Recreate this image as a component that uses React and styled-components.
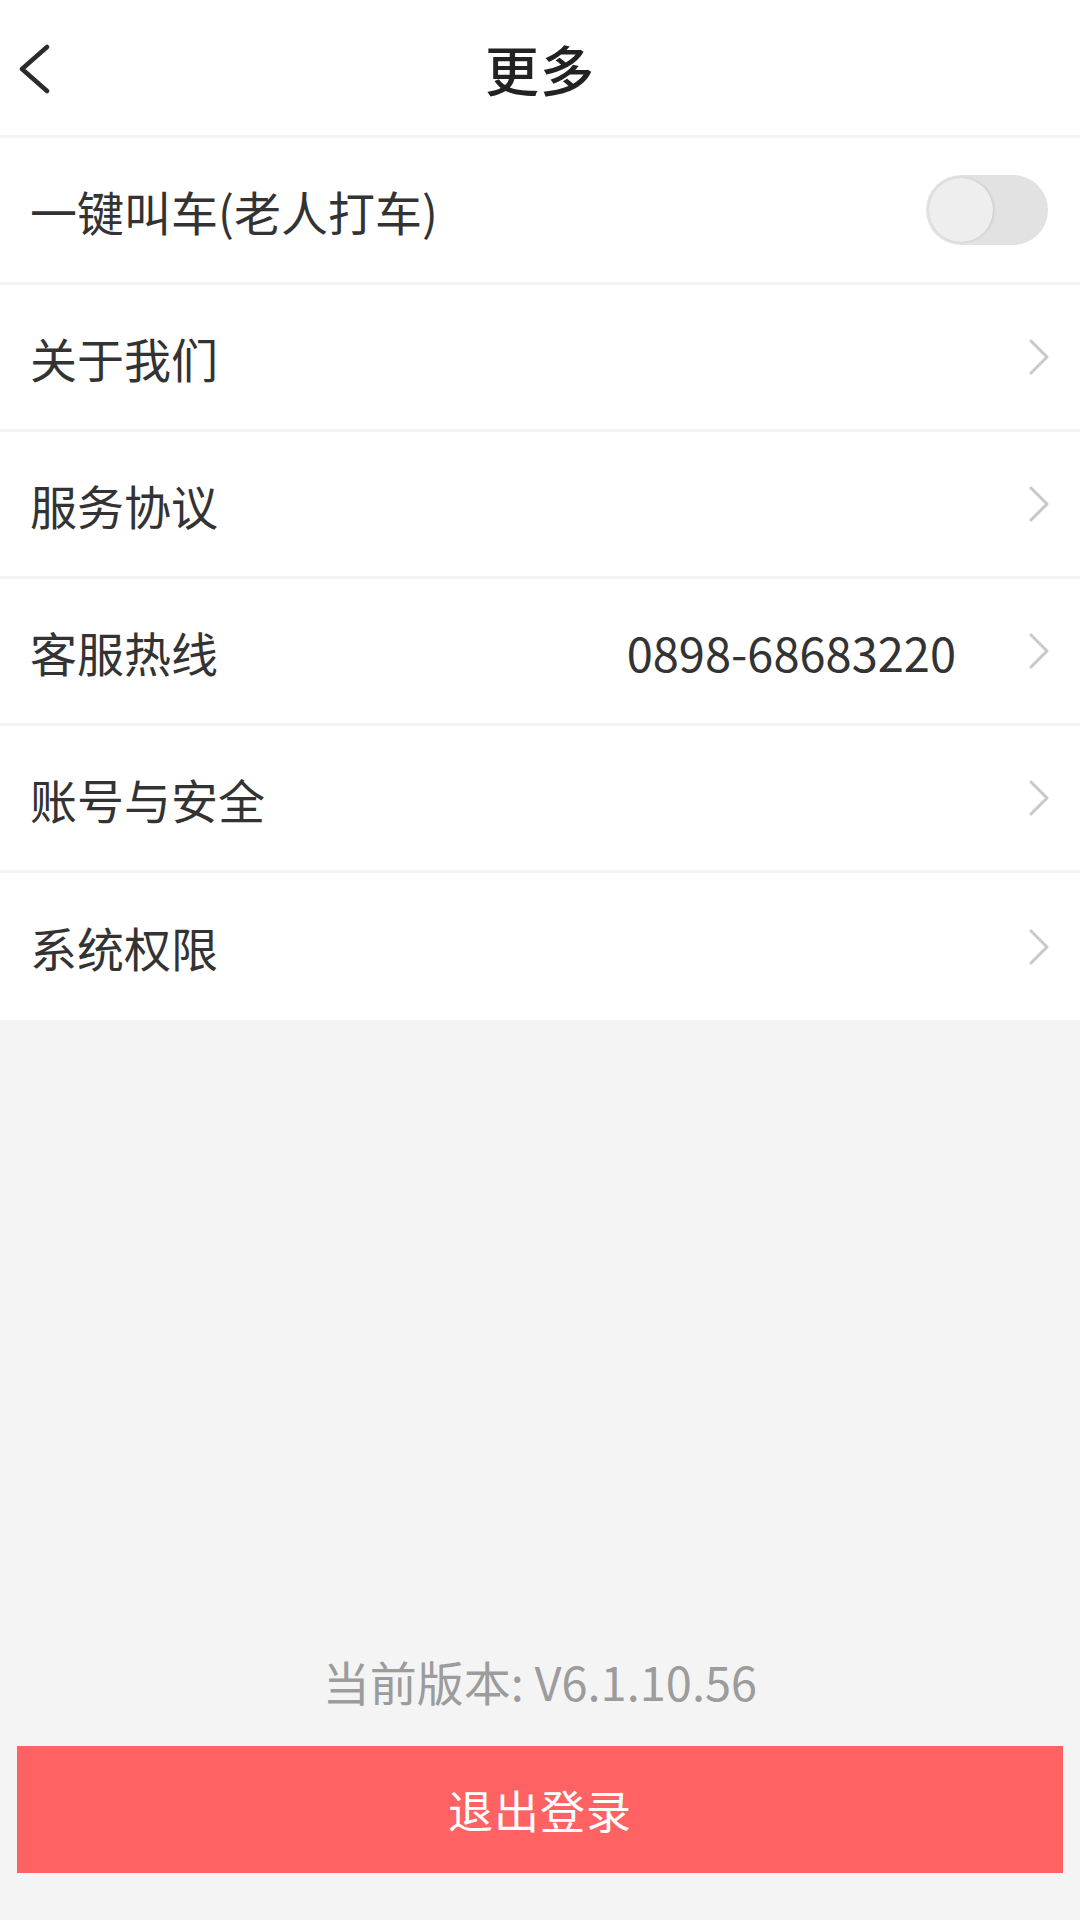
import React from "react";
import styled, { createGlobalStyle } from "styled-components";

const GlobalStyle = createGlobalStyle`
  html, body {
    margin: 0;
    padding: 0;
    background: #f4f4f4;
  }
  body {
    font-family: "Noto Sans CJK SC", "Noto Sans", sans-serif;
    -webkit-font-smoothing: antialiased;
  }
  * {
    box-sizing: border-box;
  }
`;

const rows = [
  { label: "关于我们" },
  { label: "服务协议" },
  { label: "客服热线", value: "0898-68683220" },
  { label: "账号与安全" },
  { label: "系统权限" },
];

const App = () => {
  return (
    <PageBlock>
      <GlobalStyle />
      <Header>
        <BackButton>
          <svg width="36" height="50" viewBox="0 0 36 50">
            <path
              d="M31 3 L6 25 L31 47"
              fill="none"
              stroke="#2b2b2b"
              strokeWidth="4.5"
              strokeLinecap="round"
              strokeLinejoin="round"
            />
          </svg>
        </BackButton>
        <Title>更多</Title>
        <div />
      </Header>
      <List>
        <Row>
          <Label>一键叫车(老人打车)</Label>
          <Toggle>
            <Knob />
          </Toggle>
        </Row>
        {rows.map((row, i) => (
          <Row key={row.label} $last={i === rows.length - 1}>
            <Label>{row.label}</Label>
            <RightSide>
              {row.value && <Value>{row.value}</Value>}
              <Chevron />
            </RightSide>
          </Row>
        ))}
      </List>
      <Spacer />
      <Version>当前版本: V6.1.10.56</Version>
      <LogoutButton>退出登录</LogoutButton>
    </PageBlock>
  );
};

const Chevron = () => (
  <svg width="22" height="38" viewBox="0 0 22 38">
    <path
      d="M3 3 L19 19 L3 35"
      fill="none"
      stroke="#c8c8c8"
      strokeWidth="3"
      strokeLinecap="round"
      strokeLinejoin="round"
    />
  </svg>
);

const PageBlock = styled.div`
  width: 1080px;
  min-height: 1920px;
  display: flex;
  flex-direction: column;
  background: #f4f4f4;
`;

const Header = styled.div`
  height: 138px;
  display: grid;
  grid-template-columns: 1fr auto 1fr;
  align-items: center;
  background: #ffffff;
  border-bottom: 3px solid #f3f3f3;
  padding-top: 2px;
`;

const BackButton = styled.div`
  display: flex;
  align-items: center;
  padding-left: 16px;
`;

const Title = styled.div`
  font-size: 54px;
  font-weight: 500;
  color: #222222;
  letter-spacing: 1px;
`;

const List = styled.div`
  display: flex;
  flex-direction: column;
  background: #ffffff;
`;

const Row = styled.div`
  height: 147px;
  display: flex;
  align-items: center;
  justify-content: space-between;
  padding: 0 30px;
  border-bottom: ${(p) => (p.$last ? "none" : "3px solid #f3f3f3")};
`;

const Label = styled.div`
  font-size: 47px;
  color: #333333;
`;

const RightSide = styled.div`
  display: flex;
  align-items: center;
  gap: 72px;
`;

const Value = styled.div`
  font-size: 47px;
  color: #333333;
`;

const Toggle = styled.div`
  width: 122px;
  height: 70px;
  border-radius: 35px;
  background: #e2e2e2;
  display: flex;
  align-items: center;
  padding-left: 3px;
  margin-right: 2px;
`;

const Knob = styled.div`
  width: 64px;
  height: 64px;
  border-radius: 50%;
  background: #eeeeee;
  box-shadow: 1px 0 3px rgba(0, 0, 0, 0.12);
`;

const Spacer = styled.div`
  flex: 1;
`;

const Version = styled.div`
  text-align: center;
  font-size: 47px;
  line-height: 60px;
  color: #9c9c9c;
  margin-bottom: 35px;
`;

const LogoutButton = styled.div`
  height: 127px;
  margin: 0 17px 47px;
  background: #fe6262;
  color: #ffffff;
  font-size: 45px;
  display: flex;
  align-items: center;
  justify-content: center;
  letter-spacing: 1px;
`;

export default App;
